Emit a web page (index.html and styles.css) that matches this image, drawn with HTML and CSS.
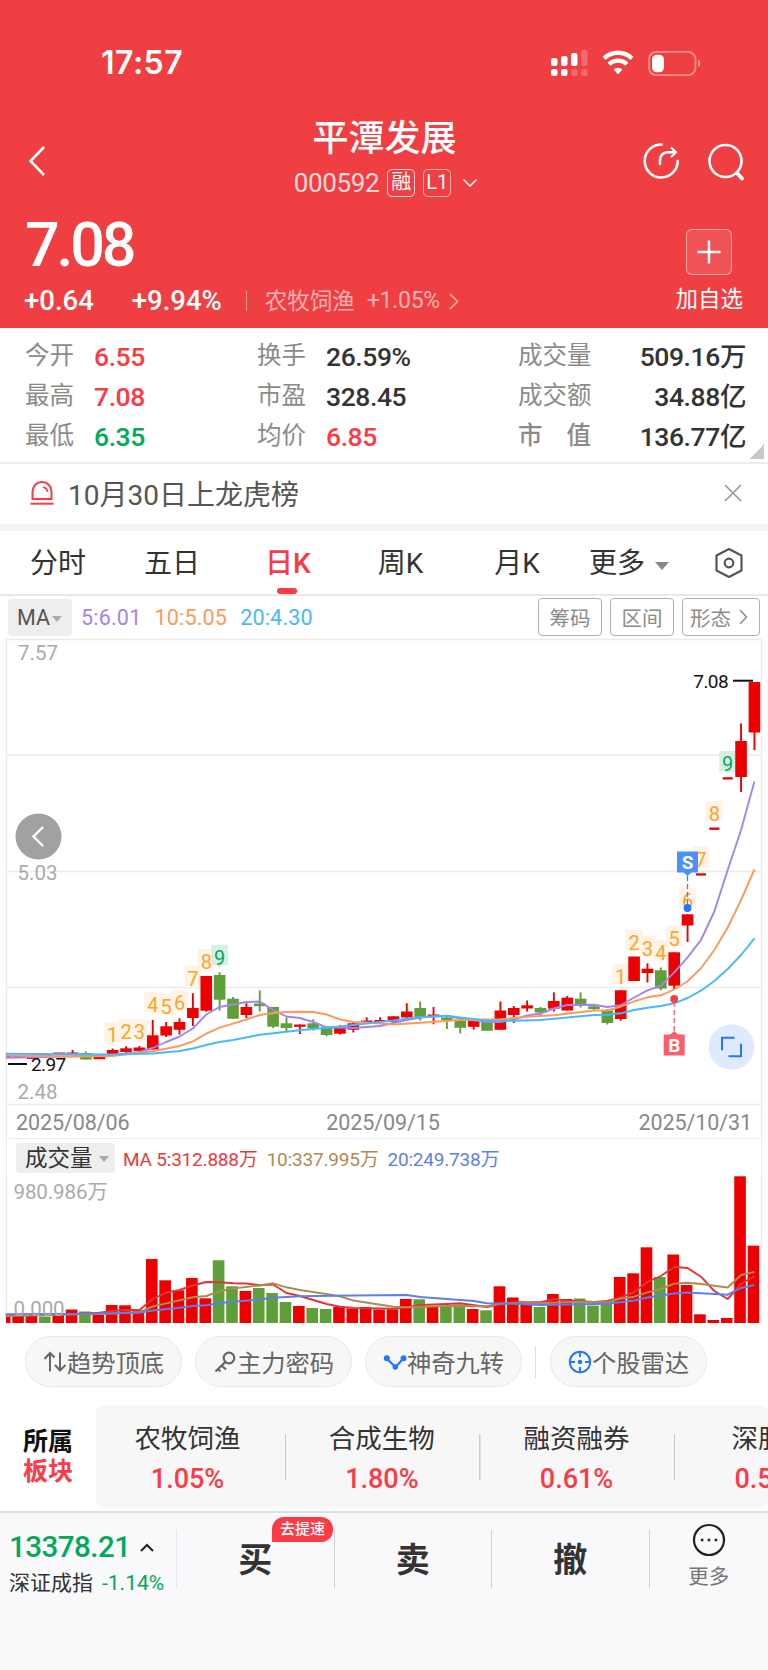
FILE: index.html
```html
<!DOCTYPE html>
<html lang="zh-CN">
<head>
  <meta charset="UTF-8" />
  <meta name="viewport" content="width=device-width, initial-scale=1.0" />
  <title>平潭发展 000592</title>
  <link rel="stylesheet" href="styles.css">
</head>
<body>
  <header>
    <div class="status-bar">
      <span class="time">17:57</span>
      <svg class="status-icons" width="152" height="30" viewBox="0 0 152 30" fill="#fff">
        <rect x="1" y="10" width="6.5" height="8" rx="2.2" />
        <rect x="11" y="8" width="6.5" height="10" rx="2.2" />
        <rect x="21" y="5" width="6.5" height="13" rx="2.2" />
        <rect x="31" y="2" width="6.5" height="16" rx="2.2" opacity=".22" />
        <rect x="1" y="21" width="6.5" height="7" rx="2.2" />
        <rect x="11" y="21" width="6.5" height="7" rx="2.2" />
        <rect x="21" y="21" width="6.5" height="7" rx="2.2" opacity=".22" />
        <rect x="31" y="21" width="6.5" height="7" rx="2.2" opacity=".22" />
        <path d="M54 10.3a20.5 20.5 0 0 1 28 0" fill="none" stroke="#fff" stroke-width="4.4" />
        <path d="M59 16.2a13.2 13.2 0 0 1 18 0" fill="none" stroke="#fff" stroke-width="4.2" />
        <path d="M63.6 21.4a6.4 6.4 0 0 1 8.8 0L68 26.5z" />
        <rect x="99" y="3.8" width="46.5" height="23.4" rx="7.5" fill="none" stroke="#fff" stroke-width="1.8" opacity=".42" />
        <rect x="102" y="6.7" width="12" height="17.6" rx="4.8" />
        <path d="M148.2 11.5c2.6 1.2 2.6 6.3 0 7.5z" opacity=".5" />
      </svg>
    </div>

    <nav class="title-bar">
      <svg width="18" height="32" viewBox="0 0 18 32" fill="none" stroke="#fff" stroke-width="2.6"><path d="M16 2L2.5 16 16 30" /></svg>
      <div class="stock-title">
        <h1>平潭发展</h1>
        <p><span class="code">000592</span><span class="tag">融</span><span class="tag tag-l1">L1</span>
          <svg width="16" height="10" viewBox="0 0 16 10" fill="none" stroke="#fff" stroke-width="1.7" opacity=".9"><path d="M1.5 1.5L8 8l6.5-6.5" /></svg>
        </p>
      </div>
      <svg class="nav-icons" width="104" height="40" viewBox="0 0 104 40" fill="none" stroke="#fff" stroke-width="2.6" stroke-linecap="round" stroke-linejoin="round">
        <path d="M19.5 3.5A16.5 16.5 0 1 0 35.7 20" />
        <path d="M18 23v-3q0-8.500 8-8.700h7.500" />
        <path d="M29.5 7l4.500 4.300-4.500 4.200" stroke-width="2.2" />
        <circle cx="83.5" cy="20" r="16" />
        <path d="M95 32l5 5.500" stroke-width="3.8" />
      </svg>
    </nav>

    <div class="price-area">
      <div>
        <div class="price">7.08</div>
        <div class="change">
          <b>+0.64</b><b>+9.94%</b>
          <span class="industry">农牧饲渔</span><span class="industry-pct">+1.05%</span>
          <svg width="10" height="17" viewBox="0 0 10 17" fill="none" stroke="#fff" stroke-width="1.6" opacity=".6"><path d="M1 1l7.5 7.5L1 16" /></svg>
        </div>
      </div>
      <div class="add-fav">
        <span class="plus"><svg width="24" height="24" viewBox="0 0 24 24" stroke="#fff" stroke-width="2.5"><path d="M12 .5v23M.5 12h23" /></svg></span>
        加自选
      </div>
    </div>
  </header>

  <section class="quotes">
    <div><label>今开</label><b class="up">6.55</b></div>
    <div><label>换手</label><b>26.59%</b></div>
    <div><label>成交量</label><b>509.16万</b></div>
    <div><label>最高</label><b class="up">7.08</b></div>
    <div><label>市盈</label><b>328.45</b></div>
    <div><label>成交额</label><b>34.88亿</b></div>
    <div><label>最低</label><b class="down">6.35</b></div>
    <div><label>均价</label><b class="up">6.85</b></div>
    <div><label class="wide"><i>市</i><i>值</i></label><b>136.77亿</b></div>
  </section>

  <section class="notice">
    <svg width="26" height="26" viewBox="0 0 26 26" fill="none" stroke="#fb3a46" stroke-width="2">
      <path d="M3.5 19v-7.500a9.500 9.500 0 0 1 19 0V19z" /><path d="M1.5 23.7h23" /><path d="M14 7.2q4 .8 4.500 4.600" stroke-width="1.7" />
    </svg>
    <span>10月30日上龙虎榜</span>
    <svg width="18" height="18" viewBox="0 0 18 18" stroke="#999" stroke-width="1.7"><path d="M1 1l16 16M17 1L1 17" /></svg>
  </section>

  <nav class="tabs">
    <a>分时</a><a>五日</a><a class="active">日K</a><a>周K</a><a>月K</a><a class="more">更多<span class="arrow"></span></a>
    <svg width="30" height="32" viewBox="0 0 30 32" fill="none" stroke="#555" stroke-width="2.2" stroke-linejoin="round"><path d="M15 2l12.500 6.500v15L15 30 2.500 23.500v-15z" /><circle cx="15" cy="16" r="4.3" /></svg>
  </nav>

  <section class="ma-bar">
    <span class="select">MA<span class="arrow"></span></span>
    <span class="ma5">5:6.01</span><span class="ma10">10:5.05</span><span class="ma20">20:4.30</span>
    <div class="tools"><span>筹码</span><span>区间</span><span>形态<svg width="9" height="16" viewBox="0 0 9 16" fill="none" stroke="#8b8b8b" stroke-width="1.5"><path d="M1 1l6.500 7L1 15" /></svg></span></div>
  </section>

  <section class="chart">
    <svg id="kline" width="768" height="500" viewBox="0 638 768 500"></svg>
    <div class="volume-head">
      <span class="select">成交量<span class="arrow"></span></span>
      <span class="v5">MA 5:312.888万</span><span class="v10">10:337.995万</span><span class="v20">20:249.738万</span>
    </div>
    <svg id="volume" width="768" height="148" viewBox="0 1176 768 148"></svg>
  </section>

  <section class="pills">
    <span><svg width="24" height="24" viewBox="0 0 24 24" fill="none" stroke="#666" stroke-width="2"><path d="M7 21.500V3.500M1.500 9L7 3l4.500 4.500M17 2.500v18M12 15l5 5.500 5.500-5.500" /></svg>趋势顶底</span>
    <span><svg width="24" height="24" viewBox="0 0 24 24" fill="none" stroke="#666" stroke-width="2.2"><circle cx="16" cy="8" r="5.3" /><path d="M12.300 12L2.500 21.500M8.500 15.500l4.500 4M5 19l2.500 2.500" /></svg>主力密码</span>
    <span><svg width="24" height="24" viewBox="0 0 24 24" fill="#2176ff" stroke="#2176ff" stroke-width="2.2"><path d="M3.500 8.500l9 8.500 8-8.500" fill="none" /><circle cx="3.800" cy="8.300" r="1.900" /><circle cx="12.300" cy="17" r="1.600" /><circle cx="20.500" cy="8.300" r="1.900" /></svg>神奇九转</span>
    <i></i>
    <span><svg width="24" height="24" viewBox="0 0 24 24" fill="none" stroke="#2176ff" stroke-width="1.9"><circle cx="12" cy="12" r="10.2" /><path d="M12 2v5M12 17v5M2 12h5M17 12h5" /><circle cx="12" cy="12" r="1.3" fill="#2176ff" /></svg>个股雷达</span>
  </section>

  <section class="sectors">
    <div class="sectors-title">所属<em>板块</em></div>
    <div class="sectors-list">
      <div>农牧饲渔<b>1.05%</b></div>
      <div>合成生物<b>1.80%</b></div>
      <div>融资融券<b>0.61%</b></div>
      <div>深股通<b>0.50%</b></div>
    </div>
  </section>

  <footer>
    <div class="index">
      <div class="index-value">13378.21<svg width="14" height="9" viewBox="0 0 14 9" fill="none" stroke="#222" stroke-width="2"><path d="M1 8l6-6 6 6" /></svg></div>
      <div class="index-name">深证成指<span>-1.14%</span></div>
    </div>
    <div class="trade">买<span class="badge">去提速</span></div>
    <div class="trade">卖</div>
    <div class="trade">撤</div>
    <div class="footer-more">
      <svg width="34" height="34" viewBox="0 0 34 34" fill="none" stroke="#222" stroke-width="2.2"><circle cx="17" cy="17" r="15" /><path d="M8.800 17h2.600M15.700 17h2.600M22.600 17h2.600" stroke-width="2.6" /></svg>
      更多
    </div>
  </footer>

  <script>
    const RED = '#ee0000', GREEN = '#5f9f3a';
    const px = i => 5.7 + 13.37 * i;

    // [direction, body top, body bottom, high, low]
    const candles = [
      ['r',1055,1057.5],['r',1055,1057.5],['r',1056.5,1059,1053.5,1059],['r',1054,1056],['r',1052.5,1055],
      ['r',1052.5,1055,1050,1055],['g',1053,1059.5,1051.5,1059.5],['r',1056.5,1059.2],
      ['r',1050,1054,1048.5,1056],['r',1048.3,1052,1046.3,1053.3],['r',1047.5,1051,1046,1051],
      ['r',1035.3,1049.5,1020,1049.5],['r',1026.3,1035.5,1022,1037],['r',1022,1029.8,1018.3,1034.5],
      ['r',1008,1018,993.3,1026],['r',976,1010.7,976,1011.7],['g',975,999.7,972.3,1010.5],
      ['g',998.7,1018.7,997,1018.7],['r',1007,1015,1003.3,1018],['g',1003.5,1006.2,990.5,1011.5],
      ['g',1007,1026.7,1007,1028],['g',1023.3,1028,1017.3,1031],['r',1024.5,1026.8,1024.5,1034],
      ['g',1023.3,1028.3,1019.3,1030.5],['g',1026.7,1035,1026.7,1036.2],['r',1026.7,1033.7,1025.3,1034.5],
      ['r',1023.3,1029.7,1023,1032.5],['r',1020.5,1023,1017.3,1023],['r',1020,1022,1017.3,1022],
      ['r',1016.3,1022,1016.3,1023.5],['r',1011.5,1017.5,1003.3,1017.5],['g',1008,1017.7,1001.5,1020.5],
      ['r',1014.5,1016.2,1007,1024.3],['g',1017.5,1020,1017,1029],['g',1020,1027.8,1020,1033.5],
      ['r',1020.7,1026.8,1020,1029.7],['g',1021.5,1030.8],['r',1010.5,1029.8,1001.5,1029.8],
      ['r',1008,1015,1006,1023],['r',1005.3,1008.5,1000.5,1011.5],['g',1008,1012.5,1007,1015],
      ['r',1001,1008.7,992.3,1011.5],['r',997.7,1010.5,996,1010.5],['g',998.7,1005,992.3,1007.5],
      ['g',1006.3,1009,1005,1010.7],['g',1010.5,1023,1009,1024.5],['r',990.3,1019,990.3,1020.7],
      ['r',956.5,981],['r',968.7,973,963.3,982.5],['g',970.3,988.5,967.5,990.3],
      ['r',952.3,985.7,952.3,989.5],['r',914.3,925.5,914.3,942],['r',873.3,875.6],['r',827.5,829.9],
      ['r',777.2,779.5],['r',741,777,723.5,792],['r',682,732.5,682,750]
    ];

    // moving averages, [index, y]
    const ma5 = [[0,1057.7],[2,1057.3],[6,1056],[8,1055],[9,1053.5],[10,1052],[11,1048],[12,1042],[13,1036.5],[14,1028.5],[15,1014.5],[16,1007],[17,1004.5],[18,1002],[19,1001.5],[20,1010],[21,1016.5],[22,1018],[23,1022],[24,1027.3],[26,1028],[28,1026],[29,1023],[30,1020],[31,1017.5],[32,1016.5],[33,1016],[34,1018.5],[36,1022],[37,1022],[38,1019.5],[39,1015.5],[40,1013.5],[41,1008.5],[42,1005],[44,1004.7],[45,1007],[46,1005.3],[47,997.5],[48,990.3],[49,985.7],[50,972.3],[51,957.3],[52,940],[53,911.5],[54,870],[55,830],[56,781.5]];
    const ma10 = [[0,1055.5],[5,1056.5],[8,1056],[9,1054.3],[10,1052.7],[11,1051.3],[12,1048.7],[13,1046],[14,1041.3],[15,1033.7],[16,1027.7],[17,1023.7],[18,1019.5],[19,1015],[20,1013],[21,1012],[22,1011.7],[23,1012],[24,1014.5],[25,1019.5],[26,1022],[27,1022.5],[29,1024.5],[31,1022.7],[34,1020],[37,1019.3],[39,1016.7],[41,1015.3],[44,1010.5],[45,1010.5],[46,1006.7],[47,1001.3],[48,997.3],[49,995.3],[50,989.5],[51,981.3],[52,968.3],[53,950],[54,927.5],[55,900],[56,869.5]];
    const ma20 = [[0,1053.7],[8,1054.5],[11,1053.5],[13,1051],[14,1048.5],[15,1045],[16,1042],[17,1040],[19,1034.7],[22,1030.3],[25,1026.5],[29,1020.5],[30,1018.7],[31,1017],[33,1015.7],[34,1017.5],[35,1019],[36,1020.5],[38,1020.8],[40,1020],[44,1015],[45,1014.7],[46,1013.3],[47,1010],[48,1007.7],[49,1006],[50,1003.3],[51,998],[52,990.7],[53,981],[54,969],[55,955],[56,938.3]];

    // nine-turn labels, [index, digit, box top]
    const turns = [[8,1,1022],[9,2,1019.3],[10,3,1019.3],[11,4,992.3],[12,5,994.3],[13,6,990.3],[14,7,965.5],[15,8,949],[16,9,944.7],
      [46,1,963.5],[47,2,930],[48,3,935.5],[49,4,940],[50,5,925.7],[51,6,888],[52,7,846.5],[53,8,801],[54,9,751]];

    const line = (x1, y1, x2, y2, c, w, extra = '') =>
      `<line x1="${x1}" y1="${y1}" x2="${x2}" y2="${y2}" stroke="${c}" stroke-width="${w}" ${extra}/>`;
    const rect = (x, y, w, h, c) => `<rect x="${x}" y="${y}" width="${w}" height="${h}" fill="${c}"/>`;
    const text = (x, y, s, cls, anchor = 'start') => `<text x="${x}" y="${y}" class="${cls}" text-anchor="${anchor}">${s}</text>`;
    const curve = (pts, c) =>
      `<polyline points="${pts.map(p => px(p[0]) + ',' + p[1]).join(' ')}" fill="none" stroke="${c}" stroke-width="1.9" stroke-linejoin="round"/>`;

    let k = '';
    [639.5, 755, 871.5, 987.5, 1104.5].forEach(y => k += line(6, y, 762, y, '#ececec', 1.3));
    k += line(6.5, 639, 6.5, 1138, '#ececec', 1.3) + line(761.5, 639, 761.5, 1138, '#ececec', 1.3);
    k += text(18, 659.5, '7.57', 'axis') + text(17.5, 880, '5.03', 'axis') + text(17.5, 1099, '2.48', 'axis');
    turns.forEach(([i, n, y]) => {
      const x = px(i);
      k += `<path d="M${x - 8.4} ${y}h16.8v20.5h-6l-2.4 2.5-2.4-2.5h-6z" fill="${n === 9 ? '#d6f1e3' : '#fff3e7'}"/>`;
      k += text(x, y + 20, n, n === 9 ? 'turn turn-end' : 'turn', 'middle');
    });
    candles.forEach(([d, t, b, h, l], i) => {
      const x = px(i), c = d === 'r' ? RED : GREEN, flat = i > 51 && i < 55;
      if (h) k += line(x, h, x, l, c, 1.9);
      const left = Math.max(6.5, x - (flat ? 5 : 5.8));
      k += rect(left, t, x + (flat ? 5 : 5.8) - left, b - t, c);
    });
    k += curve(ma5, '#a384ee') + curve(ma10, '#fd9a5b') + curve(ma20, '#47b9fd');
    k += line(8, 1064, 27, 1064, '#111', 2) + text(31, 1071, '2.97', 'mark');
    k += line(733, 680.7, 753, 680.7, '#111', 2) + text(728, 687.5, '7.08', 'mark', 'end');
    // sell / buy points
    k += line(687.5, 876, 687.5, 905, '#3f82ff', 1.3, 'stroke-dasharray="5 3"') + '<circle cx="687.5" cy="908" r="3.9" fill="#2176ff"/>';
    k += '<path d="M677 851.5h21v21h-6.5l-4 3.5-4-3.5H677z" fill="#4c8fff"/>' + text(687.5, 869, 'S', 'point', 'middle');
    k += line(674.2, 1002, 674.2, 1031, '#f9606b', 1.3, 'stroke-dasharray="5 3"') + '<circle cx="674.2" cy="999" r="3.9" fill="#f43b48"/>';
    k += '<path d="M663.7 1034.5h6.5l4-3.5 4 3.5h6.5v21h-21z" fill="#f9606b"/>' + text(674.2, 1052, 'B', 'point', 'middle');
    // floating buttons
    k += '<circle cx="38.5" cy="836.5" r="23" fill="#a1a1a1"/><path d="M43 827l-9.5 9.5L43 846" fill="none" stroke="#fff" stroke-width="2.4"/>';
    k += '<circle cx="731.5" cy="1047" r="22.8" fill="#e0e9ff"/><path d="M734.5 1037.7h-12.5v12.5M741 1043.7v12.500h-12.500" fill="none" stroke="#2176ff" stroke-width="2"/>';
    k += text(16, 1130, '2025/08/06', 'date') + text(383, 1130, '2025/09/15', 'date', 'middle') + text(752, 1130, '2025/10/31', 'date', 'end');
    document.getElementById('kline').innerHTML = k;

    // volume bar tops
    const volumes = [1316,1316,1313.5,1316.5,1313.3,1309.5,1311.5,1315,1305,1305.3,1310,1259,1280.3,1290.3,1278,1298.3,1260.3,1286.3,1291,1288,1293,1302,1306,1308,1309,1307,1308.5,1307,1309.5,1309.3,1299,1299.3,1306,1305.7,1304.5,1309,1310.3,1286.3,1297.5,1305,1307,1294,1299,1298.5,1305.5,1301.5,1277,1273.3,1247.3,1277,1254.5,1285,1314.3,1320,1318,1176.3,1245.7];
    const volGreen = [3,6,16,17,19,20,21,23,24,31,33,34,36,40,43,44,45,49];
    const v5 = [[0,1315.3],[5,1314],[7,1312.7],[8,1311],[9,1310],[10,1310],[11,1299],[12,1292.7],[13,1290],[14,1285.5],[15,1282],[16,1282.3],[17,1283.3],[18,1283.5],[19,1285.3],[20,1284.5],[21,1293],[22,1296],[23,1300],[24,1304],[25,1306.7],[26,1308],[29,1308.7],[30,1307.5],[31,1305],[33,1304],[34,1303.3],[36,1307],[37,1304.3],[38,1302.3],[40,1302.3],[41,1299.3],[42,1300.5],[44,1302],[45,1301],[46,1297.3],[47,1292],[48,1282],[49,1276],[50,1267],[51,1268],[52,1276.7],[53,1291],[54,1299],[55,1284],[56,1276]];
    const v10 = [[0,1316],[8,1313.5],[10,1312],[11,1306.5],[12,1303.3],[14,1297.3],[15,1296],[16,1291.3],[17,1288.5],[19,1285.5],[20,1283.3],[21,1287.3],[22,1290],[23,1292],[25,1296.3],[26,1300.5],[29,1306.7],[30,1307.3],[33,1306],[36,1306.3],[37,1303.5],[39,1303],[40,1303.3],[43,1301.7],[45,1302.3],[46,1298.5],[47,1296.7],[48,1292.3],[49,1289],[50,1283.7],[51,1282.7],[52,1284],[54,1287.5],[55,1275],[56,1272]];
    const v20 = [[0,1314.3],[5,1314],[10,1312.7],[11,1310.5],[13,1307.7],[14,1306],[15,1305.3],[16,1303],[19,1299.5],[20,1297.7],[22,1296.3],[26,1295.5],[30,1295],[31,1297],[35,1301],[36,1303.3],[38,1303.7],[40,1305],[45,1303.7],[47,1300.5],[48,1297.5],[50,1293.5],[51,1292.5],[54,1294.7],[55,1288],[56,1285]];

    let v = line(6.5, 1176, 6.5, 1324, '#ececec', 1.3) + line(761.5, 1176, 761.5, 1324, '#ececec', 1.3);
    volumes.forEach((y, i) => {
      const left = Math.max(6, px(i) - 6.8);
      v += rect(left, y, px(i) + 4.8 - left, 1323 - y, volGreen.includes(i) ? GREEN : RED);
    });
    v += curve(v5, '#e03537') + curve(v10, '#b08b50') + curve(v20, '#5f7fe8');
    v += text(13.5, 1198.5, '980.986万', 'axis axis-volume') + text(13.5, 1316, '0.000', 'axis axis-volume');
    document.getElementById('volume').innerHTML = v;
  </script>
</body>
</html>
```
FILE: styles.css
```css
* {
  box-sizing: border-box;
}
body {
  margin: 0;
  width: 768px;
  min-height: 1670px;
  display: flex;
  flex-direction: column;
  font-family: Roboto, "Noto Sans CJK SC", sans-serif;
  background: #fff;
  color: #333;
  white-space: nowrap;
  overflow-x: hidden;
}
h1, p {
  margin: 0;
}
svg {
  display: block;
  flex-shrink: 0;
}
b, i, em {
  font-weight: 500;
  font-style: normal;
}
.up {
  color: #fb3a46;
}
.down {
  color: #00a95c;
}
.arrow {
  display: inline-block;
  border: 5px solid transparent;
  border-top: 6px solid #aaa;
  border-bottom: 0;
}

/* header */
header {
  height: 328px;
  background: #f03f42;
  color: #fff;
}
.status-bar {
  height: 113px;
  padding: 12px 66px 0 101px;
  display: flex;
  justify-content: space-between;
  align-items: center;
}
.time {
  font-family: Inter, sans-serif;
  font-size: 32px;
  font-weight: 600;
  letter-spacing: 0.5px;
}
.title-bar {
  height: 95px;
  padding: 0 22px 0 28px;
  display: grid;
  grid-template-columns: 104px 1fr 104px;
  align-items: center;
}
.stock-title {
  text-align: center;
  line-height: 44px;
}
.stock-title h1 {
  font-size: 36px;
  font-weight: 500;
  padding-right: 5px;
}
.stock-title p {
  display: flex;
  align-items: center;
  justify-content: center;
  padding-right: 2px;
}
.code {
  font-size: 26px;
  letter-spacing: -0.4px;
  opacity: .8;
  margin-right: 8px;
}
.tag {
  width: 28px;
  height: 28px;
  line-height: 27px;
  border: 1.5px solid rgba(255, 255, 255, .8);
  border-radius: 5px;
  font-size: 20px;
  margin-right: 8px;
  display: flex;
  justify-content: center;
  align-items: center;
}
.tag-l1 {
  border-color: rgba(255, 255, 255, .6);
  margin-right: 11px;
}
.price-area {
  display: flex;
  justify-content: space-between;
  padding: 0 25px 0 24px;
}
.price {
  font-size: 61px;
  font-weight: 500;
  line-height: 75px;
  letter-spacing: -3.2px;
  padding-left: 1px;
}
.change {
  display: flex;
  align-items: center;
  line-height: 36px;
  font-size: 27.5px;
}
.change b + b {
  margin-left: 38px;
}
.industry {
  font-size: 22.5px;
  color: rgba(255, 255, 255, .6);
  margin-left: 24px;
  padding-left: 18px;
  line-height: 20px;
  border-left: 1.5px solid rgba(255, 255, 255, .45);
}
.industry-pct {
  font-size: 23px;
  color: rgba(255, 255, 255, .6);
  margin: 0 9px 0 12px;
  letter-spacing: -0.3px;
}
.add-fav {
  display: flex;
  flex-direction: column;
  align-items: center;
  padding-top: 21px;
  font-size: 22.5px;
  line-height: 49px;
}
.plus {
  width: 46px;
  height: 46px;
  border: 1.5px solid rgba(255, 255, 255, .5);
  border-radius: 6px;
  background: rgba(255, 255, 255, .1);
  display: flex;
  align-items: center;
  justify-content: center;
}

/* quotes */
.quotes {
  height: 136px;
  padding: 8px 22px 0 25px;
  display: grid;
  grid-template-columns: 232px 261px 1fr;
  grid-auto-rows: 40px;
  border-bottom: 2px solid #ededed;
  background: linear-gradient(135deg, transparent 50%, #c8c8c8 50%) 749px 116px / 15px 15px no-repeat;
}
.quotes div {
  display: flex;
  line-height: 41px;
  font-size: 26.5px;
}
.quotes b {
  letter-spacing: -0.4px;
}
.quotes div:nth-child(3n) b {
  margin-left: auto;
}
.quotes label {
  color: #8b8b8b;
  font-size: 24.5px;
  margin-right: 20px;
  line-height: 40px;
}
.wide {
  width: 73px;
  display: flex;
  justify-content: space-between;
}

/* notice */
.notice {
  height: 67px;
  padding: 0 26px 2px 29px;
  display: flex;
  align-items: center;
  border-bottom: 7px solid #f2f4f9;
  font-size: 28px;
  color: #555;
}
.notice span {
  flex: 1;
  margin-left: 13px;
}

/* tabs */
.tabs {
  height: 65px;
  padding: 0 24px 0 30px;
  display: flex;
  align-items: center;
  border-bottom: 2px solid #e9e9e9;
  font-size: 28px;
  line-height: 66px;
}
.tabs a {
  position: relative;
  height: 63px;
  margin-right: 58px;
}
.tabs .active {
  color: #fb3a46;
  font-weight: 500;
  margin-left: 7px;
  margin-right: 67px;
}
.tabs .active::after {
  content: "";
  position: absolute;
  left: 12px;
  bottom: 0;
  width: 20px;
  height: 6px;
  border-radius: 3px;
  background: #fb3a46;
}
.tabs .active + a {
  margin-right: 71px;
}
.tabs .active + a + a {
  margin-right: 49px;
}
.tabs .more {
  margin-right: auto;
}
.tabs .arrow {
  border-width: 8px 7px 0;
  margin: 0 0 3px 10px;
  border-top-color: #888;
}

/* moving average bar */
.ma-bar {
  height: 42px;
  padding: 0 8px;
  display: flex;
  align-items: center;
  font-size: 21.5px;
}
.select {
  background: #eee;
  border-radius: 4px;
  color: #555;
}
.ma-bar .select {
  width: 64px;
  line-height: 37px;
  padding-left: 9px;
  margin-right: 9px;
}
.ma-bar .arrow {
  margin: 0 0 3px 2px;
}
.ma5 { color: #a384ee; }
.ma10 { color: #fd9a5b; }
.ma20 { color: #47b9fd; }
.ma5, .ma10, .ma20 {
  letter-spacing: 0.2px;
  margin-right: 13px;
}
.tools {
  margin-left: auto;
  display: flex;
  gap: 8px;
}
.tools span {
  height: 38px;
  padding: 0 10.5px;
  border: 1.5px solid #b0b0b0;
  border-radius: 4px;
  font-size: 20.5px;
  color: #8b8b8b;
  display: flex;
  align-items: center;
  gap: 8px;
}
.tools span:last-child {
  padding: 0 11px 0 7px;
}

/* charts */
.chart text {
  font-family: Roboto, "Noto Sans CJK SC", sans-serif;
}
.axis {
  font-size: 20.5px;
  fill: #aaa;
}
.axis-volume {
  letter-spacing: -0.1px;
}
.mark {
  font-size: 19px;
  fill: #111;
  letter-spacing: -0.6px;
}
.turn {
  font-size: 20px;
  fill: #ffa426;
}
.turn-end {
  fill: #00a95c;
}
.point {
  font-size: 19px;
  font-weight: 700;
  fill: #fff;
}
.date {
  font-size: 21.5px;
  fill: #888;
  letter-spacing: -0.1px;
}
.volume-head {
  height: 38px;
  margin: 0 6px;
  padding: 0 0 0 9px;
  border: 1.3px solid #ececec;
  border-bottom: 0;
  display: flex;
  align-items: center;
  font-size: 19px;
  letter-spacing: -0.2px;
}
.volume-head .select {
  width: 99px;
  line-height: 30px;
  padding-left: 9px;
  margin-right: 8px;
  font-size: 22.5px;
  letter-spacing: 0;
  color: #333;
}
.volume-head .arrow {
  margin: 0 0 4px 6px;
}
.v5 { color: #e93a3c; }
.v10 { color: #b08b50; }
.v20 { color: #5f7fe8; }
.v5, .v10 {
  margin-right: 9px;
}

/* feature pills */
.pills {
  height: 81px;
  padding: 12px 0 0 25px;
  display: flex;
  gap: 13px;
}
.pills span {
  width: 157px;
  height: 51px;
  border: 1.5px solid #e8e8e8;
  border-radius: 26px;
  background: #f7f7f7;
  display: flex;
  align-items: center;
  justify-content: center;
  font-size: 24.3px;
  color: #666;
}
.pills i {
  width: 1px;
  height: 32px;
  margin: 10px 1px 0 0;
  background: #ddd;
}

/* sectors */
.sectors {
  height: 106px;
  display: flex;
  align-items: flex-start;
}
.sectors-title {
  width: 96px;
  padding: 22px 0 0 23px;
  font-size: 25px;
  font-weight: 700;
  line-height: 30px;
  color: #111;
}
.sectors-title em {
  display: block;
  font-weight: 700;
  color: #fb3a46;
}
.sectors-list {
  flex: 1;
  height: 103px;
  border-radius: 8px;
  background: #f7f7f7;
  display: flex;
  overflow: hidden;
}
.sectors-list div {
  flex: 0 0 194.7px;
  padding: 14px 3px 0 0;
  text-align: center;
  font-size: 26.5px;
  line-height: 40px;
  background: linear-gradient(#ccc, #ccc) right 29px / 1.5px 46px no-repeat;
}
.sectors-list div:first-child {
  flex-basis: 190px;
  padding-right: 7px;
}
.sectors-list b {
  display: block;
  color: #fb3a46;
  font-size: 27px;
}

/* bottom bar */
footer {
  flex: 1;
  border-top: 2px solid #dedede;
  background: #f9f9fc;
  display: flex;
}
.index {
  width: 177px;
  height: 58px;
  margin-top: 17px;
  padding-left: 9px;
  border-right: 1.5px solid #e8e8ec;
}
.index-value {
  display: flex;
  align-items: center;
  gap: 9px;
  font-size: 29.5px;
  font-weight: 500;
  line-height: 35px;
  letter-spacing: -0.5px;
  color: #00a95c;
}
.index-name {
  font-size: 21px;
  line-height: 37px;
}
.index-name span {
  margin-left: 9px;
  color: #00a95c;
}
.trade {
  position: relative;
  width: 157.5px;
  height: 58px;
  margin-top: 17px;
  line-height: 61px;
  text-align: center;
  font-size: 34px;
  font-weight: 700;
  border-right: 1.5px solid #d0d0d0;
}
.badge {
  position: absolute;
  top: -13px;
  left: 95px;
  width: 61px;
  height: 25px;
  line-height: 25px;
  border-radius: 12px 12px 12px 1px;
  background: #fb3a46;
  color: #fff;
  font-size: 15px;
  font-weight: 500;
}
.footer-more {
  flex: 1;
  padding-top: 10px;
  display: flex;
  flex-direction: column;
  align-items: center;
  font-size: 20.5px;
  line-height: 41px;
  color: #777;
}
```
